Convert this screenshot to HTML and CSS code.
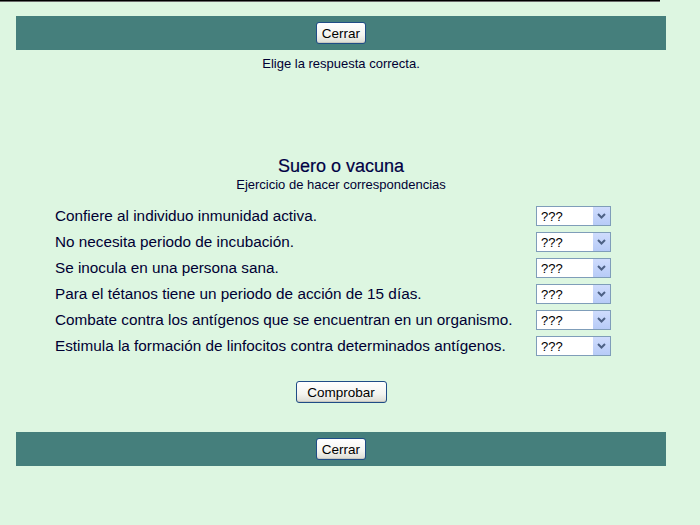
FILE: index.html
```html
<!DOCTYPE html>
<html lang="es">
<head>
<meta charset="utf-8">
<title>Suero o vacuna</title>
<link rel="stylesheet" href="styles.css">
</head>
<body>
<div class="topline"></div>
<div class="page">
  <div class="bar"><button class="btn btn-close">Cerrar</button></div>
  <p class="instructions">Elige la respuesta correcta.</p>
  <h2 class="title">Suero o vacuna</h2>
  <p class="subtitle">Ejercicio de hacer correspondencias</p>
  <div class="matches">
    <div class="lbl">Confiere al individuo inmunidad activa.</div>
    <div class="sel"><select><option>???</option></select><span class="arrow"><svg width="9" height="6" viewBox="0 0 9 6"><path d="M1 1 L4.5 4.5 L8 1" fill="none" stroke="#4d6185" stroke-width="2"/></svg></span></div>
    <div class="lbl">No necesita periodo de incubación.</div>
    <div class="sel"><select><option>???</option></select><span class="arrow"><svg width="9" height="6" viewBox="0 0 9 6"><path d="M1 1 L4.5 4.5 L8 1" fill="none" stroke="#4d6185" stroke-width="2"/></svg></span></div>
    <div class="lbl">Se inocula en una persona sana.</div>
    <div class="sel"><select><option>???</option></select><span class="arrow"><svg width="9" height="6" viewBox="0 0 9 6"><path d="M1 1 L4.5 4.5 L8 1" fill="none" stroke="#4d6185" stroke-width="2"/></svg></span></div>
    <div class="lbl">Para el tétanos tiene un periodo de acción de 15 días.</div>
    <div class="sel"><select><option>???</option></select><span class="arrow"><svg width="9" height="6" viewBox="0 0 9 6"><path d="M1 1 L4.5 4.5 L8 1" fill="none" stroke="#4d6185" stroke-width="2"/></svg></span></div>
    <div class="lbl">Combate contra los antígenos que se encuentran en un organismo.</div>
    <div class="sel"><select><option>???</option></select><span class="arrow"><svg width="9" height="6" viewBox="0 0 9 6"><path d="M1 1 L4.5 4.5 L8 1" fill="none" stroke="#4d6185" stroke-width="2"/></svg></span></div>
    <div class="lbl">Estimula la formación de linfocitos contra determinados antígenos.</div>
    <div class="sel"><select><option>???</option></select><span class="arrow"><svg width="9" height="6" viewBox="0 0 9 6"><path d="M1 1 L4.5 4.5 L8 1" fill="none" stroke="#4d6185" stroke-width="2"/></svg></span></div>
  </div>
  <div class="check-row"><button class="btn btn-check">Comprobar</button></div>
  <div class="bar bottom"><button class="btn btn-close">Cerrar</button></div>
</div>
</body>
</html>
```
FILE: styles.css
```css
html, body {
  margin: 0;
  padding: 0;
  background: #ddf6e1;
  font-family: "Liberation Sans", Arial, sans-serif;
  color: #000033;
  height: 100%;
}
.topline {
  width: 660px;
  height: 1px;
  background: #000;
  border-bottom: 1px solid #6a6a6a;
}
.page {
  width: 650px;
  margin-left: 16px;
  padding-top: 14px;
}
.bar {
  height: 34px;
  background: #457f7c;
  display: flex;
  align-items: center;
  justify-content: center;
}
.bar.bottom {
  margin-top: 29px;
}
.btn {
  font-family: "Liberation Sans", Arial, sans-serif;
  font-size: 13.5px;
  color: #000;
  height: 22px;
  padding: 0;
  border: 1px solid #1f4c86;
  border-radius: 3px;
  background: linear-gradient(#ffffff 0%, #f4f4f0 60%, #dcdcd4 100%);
  box-shadow: inset 0 -1px 0 #c8c8c0;
}
.btn-close { width: 50px; }
.btn-check { width: 91px; }
.instructions {
  margin: 7px 0 0;
  font-size: 13px;
  line-height: 14px;
  text-align: center;
}
.title {
  margin: 85px 0 0;
  font-size: 18px;
  line-height: 20px;
  font-weight: normal;
  text-align: center;
  color: #000044;
  -webkit-text-stroke: 0.2px #000044;
}
.subtitle {
  margin: 2px 0 0;
  font-size: 13px;
  line-height: 14px;
  text-align: center;
}
.matches {
  margin: 11px 0 0 39px;
  display: grid;
  grid-template-columns: 481px 75px;
  grid-auto-rows: 26px;
  align-items: center;
}
.lbl {
  font-size: 15.3px;
  line-height: 18px;
  margin-top: -1px;
}
.sel {
  position: relative;
  width: 75px;
  height: 20px;
}
.sel select {
  appearance: none;
  -webkit-appearance: none;
  width: 75px;
  height: 20px;
  margin: 0;
  padding: 0 0 0 4px;
  border: 1px solid #7f9db9;
  border-radius: 0;
  background: #fff;
  font-family: "Liberation Sans", Arial, sans-serif;
  font-size: 13px;
  color: #000;
}
.arrow {
  position: absolute;
  right: 1px;
  top: 1px;
  width: 17px;
  height: 18px;
  background: linear-gradient(#cfdcfd, #b7cbf7);
  display: flex;
  align-items: center;
  justify-content: center;
  pointer-events: none;
}
.check-row {
  margin-top: 22px;
  display: flex;
  justify-content: center;
}
```
